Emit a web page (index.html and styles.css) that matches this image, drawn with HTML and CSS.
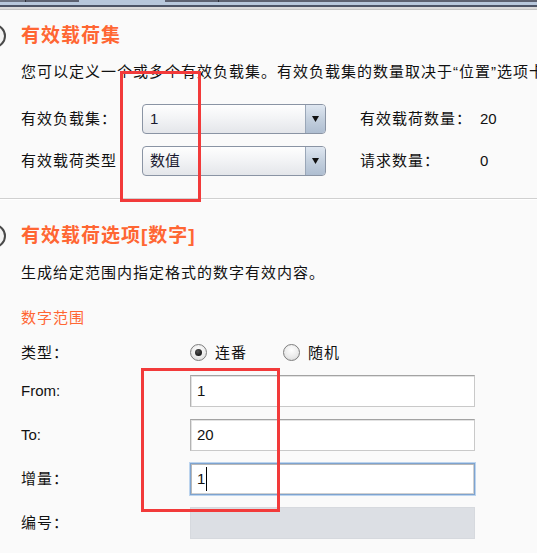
FILE: index.html
```html
<!DOCTYPE html>
<html lang="zh">
<head>
<meta charset="utf-8">
<title>有效载荷</title>
<link rel="stylesheet" href="styles.css">
</head>
<body>
<div class="tabbar">
  <div class="tabtops">
    <span class="tt tt-a"></span>
    <span class="tt tt-b"></span>
    <span class="tt tt-sel"></span>
    <span class="tt tt-c"></span>
    <span class="tt tt-d"></span>
  </div>
  <div class="tab-blue"></div>
  <div class="tab-dark"></div>
  <div class="tab-light"></div>
  <div class="tab-grey"></div>
</div>

<main class="page">
  <section class="sec">
    <div class="sec-head">
      <span class="toggle"></span>
      <h2 class="sec-title">有效载荷集</h2>
    </div>
    <p class="desc">您可以定义一个或多个有效负载集。有效负载集的数量取决于“位置”选项卡中定义的攻击类型。</p>
    <div class="set-grid">
      <span class="lbl">有效负载集：</span>
      <div class="combo"><span class="combo-val">1</span><span class="combo-btn"><svg width="7" height="6" viewBox="0 0 7 6"><polygon points="0,0 7,0 3.5,6" fill="#111"/></svg></span></div>
      <span class="lbl lbl-r">有效载荷数量：</span>
      <span class="num">20</span>

      <span class="lbl">有效载荷类型</span>
      <div class="combo"><span class="combo-val">数值</span><span class="combo-btn"><svg width="7" height="6" viewBox="0 0 7 6"><polygon points="0,0 7,0 3.5,6" fill="#111"/></svg></span></div>
      <span class="lbl lbl-r">请求数量：</span>
      <span class="num">0</span>
    </div>
  </section>

  <hr class="sep">

  <section class="sec sec2">
    <div class="sec-head">
      <span class="toggle"></span>
      <h2 class="sec-title">有效载荷选项[数字]</h2>
    </div>
    <p class="desc desc2">生成给定范围内指定格式的数字有效内容。</p>
    <h3 class="sub">数字范围</h3>
    <div class="form-grid">
      <span class="lbl">类型：</span>
      <div class="radios">
        <label class="opt"><span class="radio on"></span><span class="opt-txt">连番</span></label>
        <label class="opt"><span class="radio"></span><span class="opt-txt">随机</span></label>
      </div>

      <span class="lbl lat">From:</span>
      <div class="field">1</div>

      <span class="lbl lat">To:</span>
      <div class="field">20</div>

      <span class="lbl">增量：</span>
      <div class="field focus">1<span class="caret"></span></div>

      <span class="lbl">编号：</span>
      <div class="field disabled"></div>
    </div>
  </section>
</main>

<div class="mark mark1"></div>
<div class="mark mark2"></div>
</body>
</html>
```

FILE: styles.css
```css
html, body {
  margin: 0;
  padding: 0;
}

body {
  position: relative;
  width: 537px;
  height: 553px;
  overflow: hidden;
  background: #fafafa;
  color: #111;
  font-family: "Liberation Sans", "Noto Sans CJK SC", sans-serif;
  font-size: 15px;
  line-height: 20px;
}

/* ---------- top tab strip ---------- */
.tabbar {
  height: 10px;
}
.tabtops {
  display: flex;
  height: 2px;
  background: #b7c7db;
}
.tt { height: 2px; box-sizing: border-box; }
.tt-a { width: 26px; background: #6c7382; border-right: 1px solid #2e323a; }
.tt-b { width: 53px; background: #5c6170; }
.tt-sel { width: 86px; background: #b7c7db; }
.tt-c { width: 54px; background: #5c6170; border-right: 1px solid #2e323a; }
.tt-d { flex: 1; background: #5c6170; }
.tab-blue { height: 3px; background: #b7c7db; }
.tab-dark { height: 2px; background: #4c5466; }
.tab-light { height: 2px; background: #dadada; }
.tab-grey { height: 1px; background: #c3c3c3; }

/* ---------- page ---------- */
.page {
  padding: 14px 0 0 21px;
}

.sec-head {
  display: flex;
  align-items: center;
  height: 24px;
}
.toggle {
  flex: none;
  width: 24px;
  height: 24px;
  box-sizing: border-box;
  border: 2px solid #4a4a4a;
  border-radius: 50%;
  background: #f4f4f4;
  margin-left: -39px;
  margin-right: 15px;
}
.sec-title {
  margin: 0;
  font-size: 19px;
  line-height: 24px;
  font-weight: bold;
  color: #ff6633;
  letter-spacing: 1px;
  white-space: nowrap;
}

.desc {
  margin: 14px 0 0;
  white-space: nowrap;
  letter-spacing: 1px;
}

.lbl {
  letter-spacing: 1px;
  white-space: nowrap;
}
.lbl.lat { letter-spacing: 0; }

/* ---------- payload set grid ---------- */
.set-grid {
  display: grid;
  grid-template-columns: 121px 184px 154px auto;
  grid-auto-rows: 30px;
  row-gap: 12px;
  align-items: center;
  margin-top: 22px;
}
.lbl-r { padding-left: 34px; }
.num { white-space: nowrap; }

.combo {
  display: flex;
  height: 30px;
  box-sizing: border-box;
  border: 1px solid #8a94a4;
  border-radius: 4px;
  overflow: hidden;
  background: linear-gradient(#fefefe, #f3f4f6 45%, #e4e6ea);
}
.combo-val {
  flex: 1;
  padding-left: 7px;
  line-height: 28px;
  color: #1a1a30;
}
.combo-btn {
  width: 19px;
  display: flex;
  align-items: center;
  justify-content: center;
  border-left: 1px solid #9aa7b8;
  background: linear-gradient(#dfe7f1, #c4d0de 50%, #afbed1);
}

.sep {
  margin: 22px 0 0 -21px;
  height: 0;
  border: 0;
  border-top: 1px solid #d0d0d0;
  border-bottom: 1px solid #ffffff;
}

/* ---------- options section ---------- */
.sec2 { margin-top: 24px; }
.desc2 { margin-top: 15px; }
.sub {
  margin: 25px 0 0;
  font-size: 15px;
  line-height: 20px;
  font-weight: normal;
  color: #ff6633;
  letter-spacing: 1px;
}

.form-grid {
  display: grid;
  grid-template-columns: 169px 285px;
  grid-template-rows: 21px;
  grid-auto-rows: 32px;
  row-gap: 12px;
  align-items: center;
  margin-top: 14px;
}

.radios {
  display: flex;
  align-items: center;
}
.opt {
  display: flex;
  align-items: center;
  width: 93px;
}
.opt-txt {
  margin-left: 8px;
  letter-spacing: 1px;
}
.radio {
  position: relative;
  width: 17px;
  height: 17px;
  box-sizing: border-box;
  border: 1px solid #7e7e7e;
  border-radius: 50%;
  background: radial-gradient(circle at 50% 35%, #ffffff 0%, #e9e9e9 60%, #cfcfcf 100%);
}
.radio.on::after {
  content: "";
  position: absolute;
  left: 4px;
  top: 4px;
  width: 7px;
  height: 7px;
  border-radius: 50%;
  background: radial-gradient(circle at 40% 35%, #555 0%, #1a1a1a 70%);
}

.field {
  height: 32px;
  box-sizing: border-box;
  background: #fff;
  border: 1px solid #c9c9c9;
  border-top-color: #a3a3a3;
  border-left-color: #b3b3b3;
  box-shadow: inset 1px 1px 0 #e2e2e2;
  padding-left: 6px;
  line-height: 30px;
  color: #111;
  display: flex;
  align-items: center;
}
.field.focus {
  border: 1px solid #7ea3cf;
  box-shadow: 0 0 0 1px #bcd4ee, inset 1px 1px 0 #b8b8b8, inset -1px -1px 0 #d0d0d0;
}
.caret {
  display: inline-block;
  width: 0;
  height: 24px;
  border-left: 1px solid #000;
  margin-left: 1px;
}
.field.disabled {
  background: #dcdfe4;
  border: 1px solid #d6d9de;
  box-shadow: none;
}

/* ---------- red annotation boxes (overlay) ---------- */
.mark {
  position: absolute;
  box-sizing: border-box;
  border: 3px solid #f23a3a;
}
.mark1 {
  left: 120px;
  top: 71px;
  width: 81px;
  height: 131px;
}
.mark2 {
  left: 141px;
  top: 368px;
  width: 139px;
  height: 144px;
}
```
